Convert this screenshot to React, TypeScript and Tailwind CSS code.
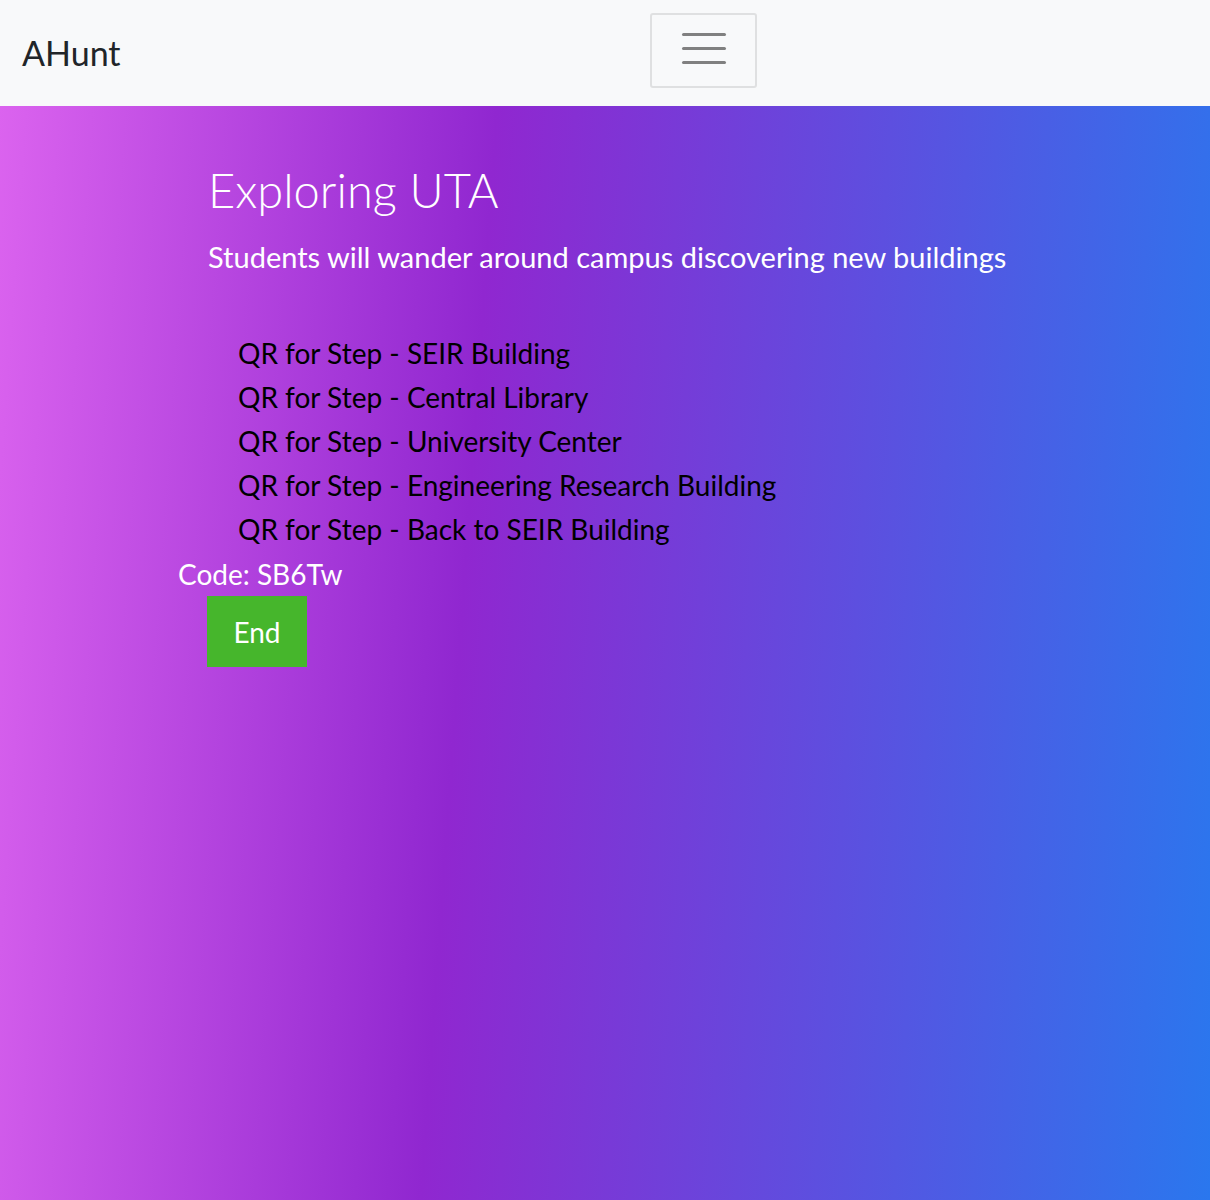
import React from "react";

const steps = [
  "SEIR Building",
  "Central Library",
  "University Center",
  "Engineering Research Building",
  "Back to SEIR Building",
];

const App = () => {
  return (
    <div
      className="min-h-screen bg-[linear-gradient(94deg,#dc64ef_0%,#9027d0_39%,#2a77ee_100%)]"
      style={{ fontFamily: "Lato, 'Open Sans', sans-serif" }}
    >
      <nav className="h-[106px] bg-[#f8f9fa] flex items-start">
        <div className="w-[650px] pl-[22px] pt-[33px]">
          <span className="text-[34px] text-[#212529] leading-[40px]">AHunt</span>
        </div>
        <button className="mt-[13px] w-[107px] h-[75px] border-2 border-[#dfe0e1] rounded-[3px] flex flex-col items-center justify-center gap-[11px] pb-[4px]">
          <span className="block h-[3px] w-[44px] rounded-full bg-[#808080]" />
          <span className="block h-[3px] w-[44px] rounded-full bg-[#808080]" />
          <span className="block h-[3px] w-[44px] rounded-full bg-[#808080]" />
        </button>
      </nav>

      <main className="ml-[178px] pt-[46px]">
        <div className="pl-[30px]">
          <h1 className="text-[47px] font-light text-white leading-[76px]">Exploring UTA</h1>
          <p className="text-[29px] text-white leading-[40px] mt-[9px]">
            Students will wander around campus discovering new buildings
          </p>
          <ul className="mt-[54px] pl-[30px]">
            {steps.map((s) => (
              <li key={s} className="text-[28px] text-black leading-[44px]">
                QR for Step - {s}
              </li>
            ))}
          </ul>
        </div>
        <div className="text-[28px] text-white leading-[44px] mt-[1px]">Code: SB6Tw</div>
        <div className="pl-[29px]">
          <button className="w-[100px] h-[71px] bg-[#46b62c] text-white text-[28px]">End</button>
        </div>
      </main>
    </div>
  );
};

export default App;
